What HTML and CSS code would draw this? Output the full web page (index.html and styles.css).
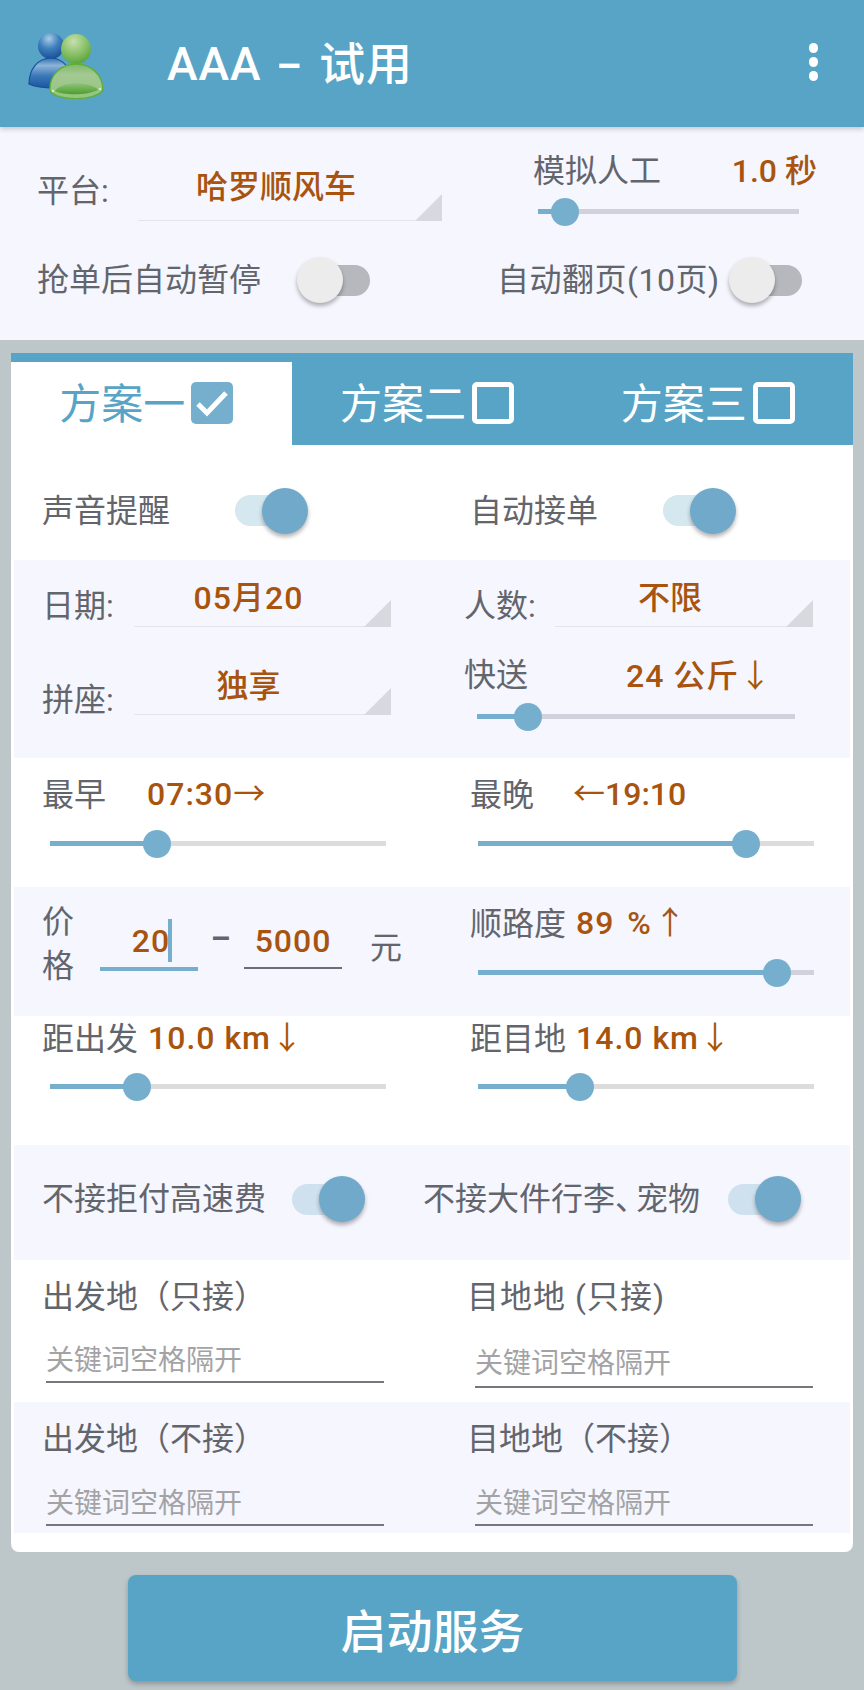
FILE: index.html
```html
<!DOCTYPE html>
<html lang="zh-CN">
<head>
    <meta charset="UTF-8">
    <meta name="viewport" content="width=device-width, initial-scale=1.0">
    <title>AAA - 试用</title>
    <link rel="stylesheet" href="styles.css">
</head>
<body>
    <header class="appbar">
        <svg class="logo" viewBox="0 0 76 70" width="76" height="70">
            <defs>
                <radialGradient id="blueHead" cx="0.42" cy="0.22" r="0.85">
                    <stop offset="0" stop-color="#a9cbe6"/>
                    <stop offset="0.45" stop-color="#3f80bd"/>
                    <stop offset="1" stop-color="#14488f"/>
                </radialGradient>
                <linearGradient id="blueBody" x1="0" y1="0" x2="0" y2="1">
                    <stop offset="0" stop-color="#2f6fb2"/>
                    <stop offset="0.25" stop-color="#8db4d8"/>
                    <stop offset="0.6" stop-color="#3a78b8"/>
                    <stop offset="1" stop-color="#1a559f"/>
                </linearGradient>
                <radialGradient id="greenHead" cx="0.42" cy="0.25" r="0.85">
                    <stop offset="0" stop-color="#c6e0ae"/>
                    <stop offset="0.55" stop-color="#84be62"/>
                    <stop offset="1" stop-color="#4c9c2c"/>
                </radialGradient>
                <linearGradient id="greenBody" x1="0" y1="0" x2="0" y2="1">
                    <stop offset="0" stop-color="#7fb868"/>
                    <stop offset="0.3" stop-color="#a3c992"/>
                    <stop offset="1" stop-color="#93c47e"/>
                </linearGradient>
                <linearGradient id="greenBand" x1="0" y1="0" x2="0" y2="1">
                    <stop offset="0" stop-color="#8fc27a"/>
                    <stop offset="1" stop-color="#4b9f2a"/>
                </linearGradient>
            </defs>
            <circle cx="23" cy="17" r="13" fill="url(#blueHead)"/>
            <path d="M1 55C1 40 10 29 23 29C35 29 44 40 44 56C30 60 12 60 1 55Z" fill="url(#blueBody)" stroke="#174f9a" stroke-width="1.2"/>
            <circle cx="48" cy="20" r="15" fill="url(#greenHead)"/>
            <path d="M22 62C21 46 33 35 48 35C63 35 75 46 75 61C68 72 30 73 22 62Z" fill="url(#greenBody)" stroke="#5fae3a" stroke-width="1.4"/>
            <path d="M27 62C34 52 62 52 70 61C60 66 37 67 27 62Z" fill="url(#greenBand)"/>
            <circle cx="25" cy="62" r="1.2" fill="#d8ecc8"/>
            <circle cx="72" cy="60" r="1.2" fill="#d8ecc8"/>
        </svg>
        <h1 class="title">AAA <span class="title-dash">-</span> 试用</h1>
        <div class="more"><i></i><i></i><i></i></div>
    </header>

    <section class="top">
        <div class="top-row">
            <div class="top-left">
                <span class="label">平台:</span>
                <div class="select top-select"><b class="value">哈罗顺风车</b></div>
            </div>
            <div class="top-right">
                <div class="between">
                    <span class="label">模拟人工</span>
                    <b class="value">1.0 秒</b>
                </div>
                <div class="slider plain"><div class="fill" style="width:10.3%"><i class="thumb"></i></div></div>
            </div>
        </div>
        <div class="top-row second">
            <div class="inline left-pause">
                <span class="label">抢单后自动暂停</span>
                <div class="toggle off"><i class="knob"></i></div>
            </div>
            <div class="inline right-page">
                <span class="label spaced">自动翻页(10页)</span>
                <div class="toggle off"><i class="knob"></i></div>
            </div>
        </div>
    </section>

    <main class="card">
        <nav class="tabs">
            <div class="tab active">方案一<span class="check"><svg viewBox="0 0 42 42" width="42" height="42"><path d="M7 22L16 31L35 11" fill="none" stroke="#fff" stroke-width="5"/></svg></span></div>
            <div class="tab">方案二<span class="check"></span></div>
            <div class="tab">方案三<span class="check"></span></div>
        </nav>

        <div class="band grid sound">
            <div class="cell inline"><span class="label">声音提醒</span><div class="toggle on gap-sound"><i class="knob"></i></div></div>
            <div class="cell inline"><span class="label">自动接单</span><div class="toggle on gap-sound"><i class="knob"></i></div></div>
        </div>

        <div class="band grid tint date">
            <div class="cell">
                <div class="field">
                    <span class="label field-label">日期:</span>
                    <div class="select"><b class="value num">05月20</b></div>
                </div>
                <div class="field field-next">
                    <span class="label field-label low">拼座:</span>
                    <div class="select"><b class="value">独享</b></div>
                </div>
            </div>
            <div class="cell">
                <div class="field shifted">
                    <span class="label field-label">人数:</span>
                    <div class="select"><b class="value">不限</b></div>
                </div>
                <div class="express">
                    <div class="inline">
                        <span class="label">快送</span>
                        <b class="value num express-value">24 公斤<span class="arrow">↓</span></b>
                    </div>
                    <div class="slider plain express-slider"><div class="fill" style="width:16%"><i class="thumb"></i></div></div>
                </div>
            </div>
        </div>

        <div class="band grid range">
            <div class="cell">
                <div class="inline"><span class="label name">最早</span><b class="value num">07:30<span class="arrow">→</span></b></div>
                <div class="slider"><div class="fill" style="width:31.8%"><i class="thumb"></i></div></div>
            </div>
            <div class="cell">
                <div class="inline"><span class="label name late">最晚</span><b class="value"><span class="arrow">←</span>19:10</b></div>
                <div class="slider"><div class="fill" style="width:79.8%"><i class="thumb"></i></div></div>
            </div>
        </div>

        <div class="band grid tint range">
            <div class="cell price">
                <span class="label price-label">价<br>格</span>
                <div class="amount focus"><b class="value num">20</b><i class="caret"></i></div>
                <span class="label dash">-</span>
                <div class="amount"><b class="value num">5000</b></div>
                <span class="label unit">元</span>
            </div>
            <div class="cell">
                <div class="inline"><span class="label name-short">顺路度</span><b class="value num wide-gap">89 %<span class="arrow">↑</span></b></div>
                <div class="slider plain"><div class="fill" style="width:89%"><i class="thumb"></i></div></div>
            </div>
        </div>

        <div class="band grid range dist">
            <div class="cell">
                <div class="inline"><span class="label name-short">距出发</span><b class="value num">10.0 km<span class="arrow">↓</span></b></div>
                <div class="slider"><div class="fill" style="width:25.9%"><i class="thumb"></i></div></div>
            </div>
            <div class="cell">
                <div class="inline"><span class="label name-short">距目地</span><b class="value num">14.0 km<span class="arrow">↓</span></b></div>
                <div class="slider"><div class="fill" style="width:30.4%"><i class="thumb"></i></div></div>
            </div>
        </div>

        <div class="band grid tint refuse">
            <div class="cell inline"><span class="label">不接拒付高速费</span><div class="toggle on pale gap-fee"><i class="knob"></i></div></div>
            <div class="cell inline luggage"><span class="label">不接大件行李<span class="tight">、</span>宠物</span><div class="toggle on pale gap-bag"><i class="knob"></i></div></div>
        </div>

        <div class="band grid places">
            <div class="cell">
                <div class="label">出发地（只接）</div>
                <input class="keyword" type="text" placeholder="关键词空格隔开">
            </div>
            <div class="cell right-place">
                <div class="label spaced-more">目地地 (只接)</div>
                <input class="keyword lower" type="text" placeholder="关键词空格隔开">
            </div>
        </div>

        <div class="band grid tint places last">
            <div class="cell">
                <div class="label">出发地（不接）</div>
                <input class="keyword" type="text" placeholder="关键词空格隔开">
            </div>
            <div class="cell right-place">
                <div class="label">目地地（不接）</div>
                <input class="keyword" type="text" placeholder="关键词空格隔开">
            </div>
        </div>
    </main>

    <button class="start">启动服务</button>
</body>
</html>
```

FILE: styles.css
```css
* {
    box-sizing: border-box;
}
body {
    margin: 0;
    width: 864px;
    height: 1690px;
    overflow: hidden;
    background: #bdc7ca;
    font-family: Roboto, "Noto Sans CJK SC", sans-serif;
    font-size: 32px;
    line-height: 40px;
    color: #63656d;
}
b {
    font-weight: 500;
}
i {
    display: block;
}

/* app bar */
.appbar {
    height: 127px;
    display: flex;
    align-items: center;
    background: #57a4c6;
    padding: 0 46px 0 28px;
    position: relative;
    box-shadow: 0 2px 5px rgba(0, 0, 0, .2);
}
.logo {
    flex: none;
    margin-top: 1px;
}
.title {
    margin: 0 0 0 63px;
    font-size: 46px;
    font-weight: 500;
    letter-spacing: 1px;
    color: #fff;
}
.title-dash {
    display: inline-block;
    margin: 0 8px;
    transform: scaleX(1.7);
}
.more {
    margin-left: auto;
    margin-top: -3px;
    display: flex;
    flex-direction: column;
    gap: 4.5px;
}
.more i {
    width: 9.5px;
    height: 9.5px;
    border-radius: 50%;
    background: #fff;
}

/* top settings */
.top {
    height: 213px;
    background: #f5f6fe;
    padding: 24px 0 0 37px;
}
.top-row {
    display: flex;
    height: 84px;
}
.top-left {
    width: 405px;
    display: flex;
    align-items: flex-end;
    height: 70px;
}
.top-left .label {
    width: 101px;
    margin-bottom: 10px;
}
.top-right {
    width: 290px;
    margin-left: 91px;
}
.between {
    display: flex;
    justify-content: space-between;
    padding-right: 6px;
}
.top-right .slider {
    width: 261px;
    margin: 18px 0 0 5px;
}
.select.top-select {
    width: 304px;
    line-height: 27px;
}
.second {
    margin-top: 14px;
    height: 62px;
}
.left-pause {
    width: 460px;
}
.left-pause .toggle {
    margin-left: 39px;
}
.right-page .toggle {
    margin-left: 12px;
}
.spaced {
    letter-spacing: .5px;
}
.spaced-more {
    letter-spacing: 1px;
}

/* shared controls */
.inline {
    display: flex;
    align-items: center;
}
.value {
    color: #a8540f;
}
.value.num {
    letter-spacing: 1px;
}
.wide-gap {
    word-spacing: 4px;
}
.wide-gap .arrow {
    margin-left: 2px;
}
.arrow {
    font-weight: 400;
    font-family: "Noto Sans CJK SC", sans-serif;
}
.select {
    position: relative;
    width: 257px;
    height: 47px;
    padding-right: 28px;
    border-bottom: 1.5px solid #e3e4ec;
    text-align: center;
    line-height: 37px;
}
.select::after {
    content: "";
    position: absolute;
    right: 0;
    bottom: -1px;
    width: 27px;
    height: 27px;
    background: #d8d9df;
    clip-path: polygon(100% 0, 100% 100%, 0 100%);
}
.slider {
    height: 5px;
    background: #dcdcdc;
}
.slider.plain {
    background: #d0d1db;
}
.fill {
    position: relative;
    height: 100%;
    background: #75afcd;
}
.thumb {
    position: absolute;
    right: -14px;
    top: -11.5px;
    width: 28px;
    height: 28px;
    border-radius: 50%;
    background: #75afcd;
}
.toggle {
    position: relative;
    flex: none;
    width: 70px;
    height: 31px;
    border-radius: 16px;
}
.knob {
    position: absolute;
    top: -7.5px;
    width: 46px;
    height: 46px;
    border-radius: 50%;
    box-shadow: 0 3px 4px rgba(0, 0, 0, .3);
}
.toggle.off {
    background: #b7b8be;
}
.toggle.off .knob {
    left: -3px;
    background: #ececec;
}
.toggle.on {
    background: #d5e7ef;
}
.toggle.pale {
    background: #cfe1ef;
}
.toggle.on .knob {
    right: -3px;
    background: #70a9c9;
}

/* card */
.card {
    margin: 13px 11px 0;
    height: 1199px;
    background: #fff;
    border-radius: 0 0 8px 8px;
    overflow: hidden;
}
.tabs {
    display: flex;
    height: 92px;
    padding-top: 9px;
    background: #57a4c6;
}
.tab {
    flex: 1;
    display: flex;
    align-items: center;
    justify-content: center;
    gap: 6px;
    font-size: 42px;
    color: #fff;
    padding: 2px 10px 0 0;
}
.tab.active {
    background: #fff;
    color: #57a4c6;
}
.check {
    width: 42px;
    height: 42px;
    border: 5px solid #fff;
    border-radius: 5px;
    margin-top: -4px;
}
.active .check {
    border: 0;
    background: #75afcd;
}
.check svg {
    display: block;
}
.band {
    margin: 0 3px;
}
.grid {
    display: grid;
    grid-template-columns: 418px 418px;
}
.tint {
    background: #f5f6fe;
}
.cell {
    padding-left: 28px;
}
.cell + .cell {
    padding-left: 38px;
}

.sound {
    height: 115px;
    padding-top: 16px;
}
.gap-sound {
    margin-left: 64.5px;
}

/* date, seats, express */
.date {
    height: 198px;
    padding-top: 20px;
}
.field {
    display: flex;
    align-items: flex-end;
}
.field-label {
    width: 92px;
    line-height: 42px;
}
.field-label.low {
    line-height: 30px;
}
.field-next {
    margin-top: 41px;
}
.shifted {
    margin-left: -6px;
}
.shifted .field-label {
    width: 91px;
}
.shifted .select {
    width: 258px;
}
.express {
    margin: 26px 0 0 -6px;
}
.express-value {
    margin-left: 98px;
}
.express-slider {
    width: 318px;
    margin: 18px 0 0 13px;
}

/* sliders */
.range {
    height: 129px;
    padding-top: 17px;
}
.range .inline {
    height: 40px;
}
.range .value {
    margin-top: -5px;
}
.range .amount .value {
    margin-top: 0;
}
.range .slider {
    width: 336px;
    margin: 26px 0 0 8px;
}
.name {
    width: 105px;
}
.name.late {
    width: 103px;
}
.name-short {
    width: 106px;
}
.dist {
    padding-top: 3px;
}
.dist .slider {
    margin-top: 25px;
}

/* price */
.price {
    display: flex;
    align-items: flex-start;
    padding-top: 0;
}
.price-label {
    width: 58px;
    line-height: 44px;
    margin-top: -4px;
}
.amount {
    position: relative;
    width: 98px;
    height: 49px;
    padding-top: 1px;
    border-bottom: 2px solid #6b6d78;
    text-align: center;
    margin-top: 16px;
}
.amount.focus {
    height: 51px;
    padding-left: 4px;
    border-bottom: 4px solid #75afcd;
}
.caret {
    position: absolute;
    right: 26px;
    top: -1px;
    width: 4px;
    height: 43px;
    background: #75afcd;
}
.dash {
    width: 46px;
    text-align: center;
    margin-top: 13px;
    font-weight: 700;
    transform: scaleX(1.8);
}
.unit {
    margin: 24px 0 0 28px;
}

/* toggles */
.refuse {
    height: 115px;
    padding-top: 0;
}
.refuse .cell {
    height: 108px;
}
.gap-fee {
    margin-left: 26px;
}
.cell.luggage {
    margin-left: -47px;
}
.tight {
    letter-spacing: -11px;
}
.gap-bag {
    margin-left: 28px;
}

/* keywords */
.places {
    height: 142px;
    padding-top: 17px;
}
.places.last {
    height: 131px;
}
.cell.right-place {
    margin-left: -3px;
}
.keyword {
    display: block;
    width: 338px;
    height: 46px;
    margin: 20px 0 0 4px;
    padding: 2px 0 0 0;
    border: 0;
    border-bottom: 2px solid #76777c;
    background: transparent;
    font-family: inherit;
    font-size: 28px;
    outline: 0;
}
.last .keyword {
    margin-top: 21px;
}
.keyword::placeholder {
    color: #a3a3a5;
}
.right-place .keyword {
    margin-left: 8px;
}
.keyword.lower {
    margin-top: 25px;
    padding: 0 0 2px 0;
}

/* start button */
.start {
    display: block;
    width: 609px;
    height: 106px;
    margin: 23px 0 0 128px;
    padding-bottom: 2px;
    border: 0;
    border-radius: 8px;
    background: #57a4c6;
    box-shadow: 0 3px 5px rgba(0, 0, 0, .25);
    color: #fff;
    font-family: inherit;
    font-size: 46px;
    font-weight: 500;
}
```
